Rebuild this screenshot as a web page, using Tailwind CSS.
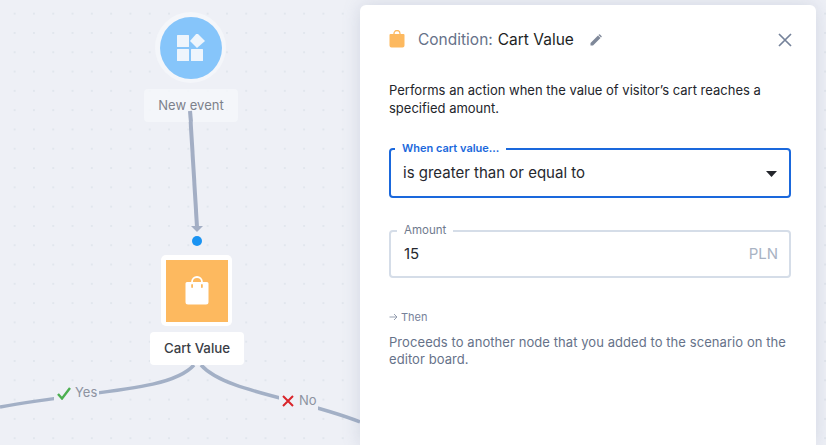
<!DOCTYPE html>
<html lang="en">
  <head>
    <meta charset="UTF-8" />
    <meta name="viewport" content="width=device-width, initial-scale=1.0" />
    <script src="https://cdn.jsdelivr.net/npm/@tailwindcss/browser@4"></script>
    <title>Cart Value</title>
  </head>
  <body class="overflow-hidden bg-[#eef0f6] font-['Inter',sans-serif]">
    <div class="flex h-[445px] w-[826px] overflow-hidden bg-[radial-gradient(#e1e6ed_1px,transparent_1.2px)] bg-[length:19.3px_19.3px] bg-[position:5px_4px]">
      <!-- editor board -->
      <div class="relative w-[360px] shrink-0">
        <svg class="absolute inset-0" width="360" height="445" fill="none">
          <path d="M190 111 L197 227" stroke="#a3aec4" stroke-width="4" />
          <path d="M191 226 L203 226 L197 232 Z" fill="#a3aec4" />
          <path d="M194 365 C170 392 90 390 0 407" stroke="#a3b0c6" stroke-width="3.5" />
          <path d="M201 365 C225 392 300 398 360 422" stroke="#a3b0c6" stroke-width="3.5" />
        </svg>

        <!-- new event node -->
        <div class="absolute left-[155px] top-[12px] flex h-[71px] w-[71px] items-center justify-center rounded-full bg-[#f4f6fa]">
          <div class="flex h-[62px] w-[62px] items-center justify-center rounded-full bg-[#86c5fa]">
            <svg width="28" height="27" viewBox="0 0 28 27" fill="#eef5fc">
              <rect x="0" y="1" width="12" height="12" rx="0.5" />
              <rect x="0" y="15" width="12" height="12" rx="0.5" />
              <rect x="14" y="15" width="12" height="12" rx="0.5" />
              <path d="M20 -1 L28 7 L20 14 L13 7 Z" />
            </svg>
          </div>
        </div>
        <div class="absolute left-[144px] top-[89px] flex h-[33px] w-[94px] items-center justify-center rounded-[4px] bg-[#f5f7fa]/85 text-[13px] text-[#7d818b]">New event</div>
        <svg class="absolute left-0 top-0" width="360" height="130" fill="none">
          <path d="M190 111 L191 122" stroke="#a3aec4" stroke-width="4" />
        </svg>

        <div class="absolute left-[192px] top-[236px] h-[10px] w-[10px] rounded-full bg-[#1a93f2]"></div>

        <!-- cart value node -->
        <div class="absolute left-[161px] top-[255px] flex h-[71px] w-[71px] items-center justify-center rounded-[5px] bg-white">
          <div class="flex h-[62px] w-[62px] items-center justify-center bg-[#fdb95f]">
            <svg width="24" height="29" viewBox="0 0 24 29" fill="none">
              <path d="M7 8 V6 a5 5 0 0 1 10 0 V8" stroke="#fff" stroke-width="1.8" />
              <path d="M2 6 H22 a1.5 1.5 0 0 1 1.5 1.5 V26 a2.5 2.5 0 0 1 -2.5 2.5 H3 a2.5 2.5 0 0 1 -2.5 -2.5 V7.5 A1.5 1.5 0 0 1 2 6 Z" fill="#fff" />
              <rect x="6.2" y="8" width="1.8" height="4" rx="0.9" fill="#fdb95f" />
              <rect x="16" y="8" width="1.8" height="4" rx="0.9" fill="#fdb95f" />
            </svg>
          </div>
        </div>
        <div class="absolute left-[150px] top-[332px] flex h-[33px] w-[94px] items-center justify-center rounded-[4px] bg-white text-[13.3px] font-medium text-[#3a3d45]">Cart Value</div>

        <!-- branch labels -->
        <div class="absolute left-[54px] top-[383px] flex h-[20px] items-center gap-[4px] bg-[#eef0f6] pl-[3px] pr-[2px] text-[13px] text-[#8d93a1]">
          <svg width="14" height="13" viewBox="0 0 14 13" fill="none"><path d="M1 7 L5 11.5 L13 1" stroke="#4caf50" stroke-width="2.4" /></svg>
          <span>Yes</span>
        </div>
        <div class="absolute left-[279px] top-[391px] flex h-[20px] items-center gap-[5px] bg-[#eef0f6] pl-[3px] pr-[1px] text-[13px] text-[#8d93a1]">
          <svg width="12" height="12" viewBox="0 0 12 12" fill="none"><path d="M1 1 L11 11 M11 1 L1 11" stroke="#d9252b" stroke-width="2" /></svg>
          <span>No</span>
        </div>
      </div>

      <!-- settings panel -->
      <div class="relative mt-[5px] w-[456px] shrink-0 rounded-t-[6px] bg-white pl-[29px] pr-[26px] shadow-[0_0_18px_rgba(110,122,160,0.22)]">
        <div class="flex h-[69px] items-center">
          <svg class="mr-[13px] mb-[1px]" width="16" height="18" viewBox="0 0 16 18" fill="none">
            <path d="M5 4 V3.5 a3 3 0 0 1 6 0 V4" stroke="#fdb95f" stroke-width="1.3" />
            <path d="M1.5 4 H14.5 a1 1 0 0 1 1 1 V15.5 a2 2 0 0 1 -2 2 H2.5 a2 2 0 0 1 -2 -2 V5 a1 1 0 0 1 1 -1 Z" fill="#fdb95f" />
          </svg>
          <span class="text-[15.5px] text-[#667189]">Condition:</span>
          <span class="ml-[5px] text-[15.5px] text-[#1d1f24]">Cart Value</span>
          <svg class="ml-[16px]" width="12" height="12" viewBox="0 0 12 12" fill="#7f8899"><path d="M0.5 9 L8 1.5 L10.5 4 L3 11.5 H0.5 Z M9 0.5 a0.7 0.7 0 0 1 1 0 L11.5 2 a0.7 0.7 0 0 1 0 1 L11 3.5 L8.5 1 Z" /></svg>
          <svg class="ml-auto mr-[-2px]" width="14" height="14" viewBox="0 0 14 14" fill="none"><path d="M1 1 L13 13 M13 1 L1 13" stroke="#75829a" stroke-width="1.7" /></svg>
        </div>

        <p class="mt-[8px] text-[13px] leading-[17.5px] text-[#23252b]">Performs an action when the value of visitor’s cart reaches a specified amount.</p>

        <!-- select -->
        <div class="relative mt-[31px] flex h-[50px] w-[402px] items-center justify-between rounded-[4px] border-2 border-[#1a68dc] pl-[12px] pr-[12px] pt-[1px]">
          <span class="absolute left-[4px] top-[-9px] bg-white px-[7px] text-[11px] font-semibold leading-[14px] text-[#1a68dc]">When cart value...</span>
          <span class="text-[15px] text-[#26282e]">is greater than or equal to</span>
          <svg width="11" height="6" viewBox="0 0 11 6" fill="#24262c"><path d="M0 0 H11 L5.5 6 Z" /></svg>
        </div>

        <!-- amount -->
        <div class="relative mt-[32px] flex h-[48px] w-[402px] items-center justify-between rounded-[4px] border-2 border-[#d5dde8] pl-[13px] pr-[11px]">
          <span class="absolute left-[6px] top-[-9px] bg-white px-[7px] text-[11.5px] leading-[14px] text-[#6f7a8e]">Amount</span>
          <span class="text-[15px] text-[#26282e]">15</span>
          <span class="text-[15px] text-[#a9b3c3]">PLN</span>
        </div>

        <div class="mt-[31px] flex items-center gap-[3px] text-[11px] text-[#77829a]">
          <svg width="9" height="8" viewBox="0 0 9 8" fill="none"><path d="M0.5 4 H8 M5 1 L8 4 L5 7" stroke="#8b95a8" stroke-width="0.9" /></svg>
          <span>Then</span>
        </div>
        <p class="mt-[8px] text-[13px] leading-[17.5px] tracking-[0.07px] text-[#667289]">Proceeds to another node that you added to the scenario on the editor board.</p>
      </div>
    </div>
  </body>
</html>
